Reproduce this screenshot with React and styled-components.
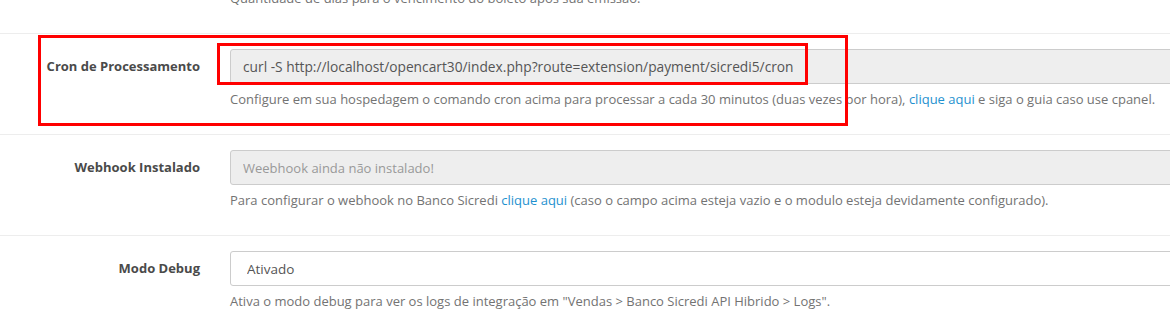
import React from 'react';
import styled, { createGlobalStyle } from 'styled-components';

const GlobalStyle = createGlobalStyle`
  html, body {
    margin: 0;
    padding: 0;
    background: #fff;
    overflow: hidden;
  }
  body {
    font-family: "Open Sans", "Liberation Sans", sans-serif;
    font-size: 13px;
    color: #666;
  }
`;

const Page = styled.div`
  position: relative;
  width: 1320px;
  margin-top: -12px;
`;

const FormGroup = styled.div`
  display: grid;
  grid-template-columns: 215px 1075px;
  padding: ${(p) => (p.$first ? '0 0 15px' : '15px 0')};
  border-top: ${(p) => (p.$first ? 'none' : '1px solid #ededed')};
`;

const Label = styled.label`
  padding: 9px 15px 0 0;
  text-align: right;
  font-weight: 700;
  font-size: 13px;
  line-height: 17px;
  color: #4a4a4a;
`;

const Field = styled.div`
  grid-column: 2;
  padding-left: 15px;
`;

const Input = styled.input`
  display: block;
  box-sizing: border-box;
  width: 100%;
  height: 35px;
  padding: 0 12px;
  border: 1px solid #ccc;
  border-radius: 3px;
  background: ${(p) => (p.readOnly ? '#eee' : '#fff')};
  font-family: "Open Sans", "Liberation Sans", sans-serif;
  font-size: ${(p) => (p.$wide ? '13.75px' : '13px')};
  color: #555;
  outline: none;

  &::placeholder {
    color: #999;
  }
`;

const Select = styled.select`
  display: block;
  box-sizing: border-box;
  width: 100%;
  height: 35px;
  padding: 0 16px;
  border: 1px solid #ccc;
  border-radius: 3px;
  background: #fff;
  font-family: "Open Sans", "Liberation Sans", sans-serif;
  font-size: 13.5px;
  color: #555;
  appearance: none;
  outline: none;
`;

const Help = styled.p`
  margin: ${(p) => (p.$first ? '0' : '5px')} 0 10px;
  font-size: 13px;
  line-height: 20px;
  color: #737373;
  white-space: nowrap;
`;

const Link = styled.a`
  color: #1e91cf;
  text-decoration: none;
`;

const Highlight = styled.div`
  position: absolute;
  box-sizing: border-box;
  border: 3px solid #ff0000;
  pointer-events: none;
`;

const App = () => {
  return (
    <>
      <GlobalStyle />
      <Page>
        <FormGroup $first>
          <Field>
            <Help $first>Quantidade de dias para o vencimento do boleto após sua emissão.</Help>
          </Field>
        </FormGroup>

        <FormGroup>
          <Label htmlFor="cron">Cron de Processamento</Label>
          <Field>
            <Input
              id="cron"
              readOnly
              $wide
              value="curl -S http://localhost/opencart30/index.php?route=extension/payment/sicredi5/cron"
            />
            <Help>
              Configure em sua hospedagem o comando cron acima para processar a cada 30 minutos (duas vezes por hora),{' '}
              <Link href="#">clique aqui</Link> e siga o guia caso use cpanel.
            </Help>
          </Field>
        </FormGroup>

        <FormGroup>
          <Label htmlFor="webhook">Webhook Instalado</Label>
          <Field>
            <Input id="webhook" readOnly value="" placeholder="Weebhook ainda não instalado!" />
            <Help>
              Para configurar o webhook no Banco Sicredi <Link href="#">clique aqui</Link> (caso o campo acima esteja
              vazio e o modulo esteja devidamente configurado).
            </Help>
          </Field>
        </FormGroup>

        <FormGroup>
          <Label htmlFor="debug">Modo Debug</Label>
          <Field>
            <Select id="debug" defaultValue="1">
              <option value="1">Ativado</option>
              <option value="0">Desativado</option>
            </Select>
            <Help>Ativa o modo debug para ver os logs de integração em "Vendas &gt; Banco Sicredi API Hibrido &gt; Logs".</Help>
          </Field>
        </FormGroup>

        <Highlight style={{ left: 38, top: 47, width: 810, height: 91 }} />
        <Highlight style={{ left: 217, top: 55, width: 591, height: 42 }} />
      </Page>
    </>
  );
};

export default App;
